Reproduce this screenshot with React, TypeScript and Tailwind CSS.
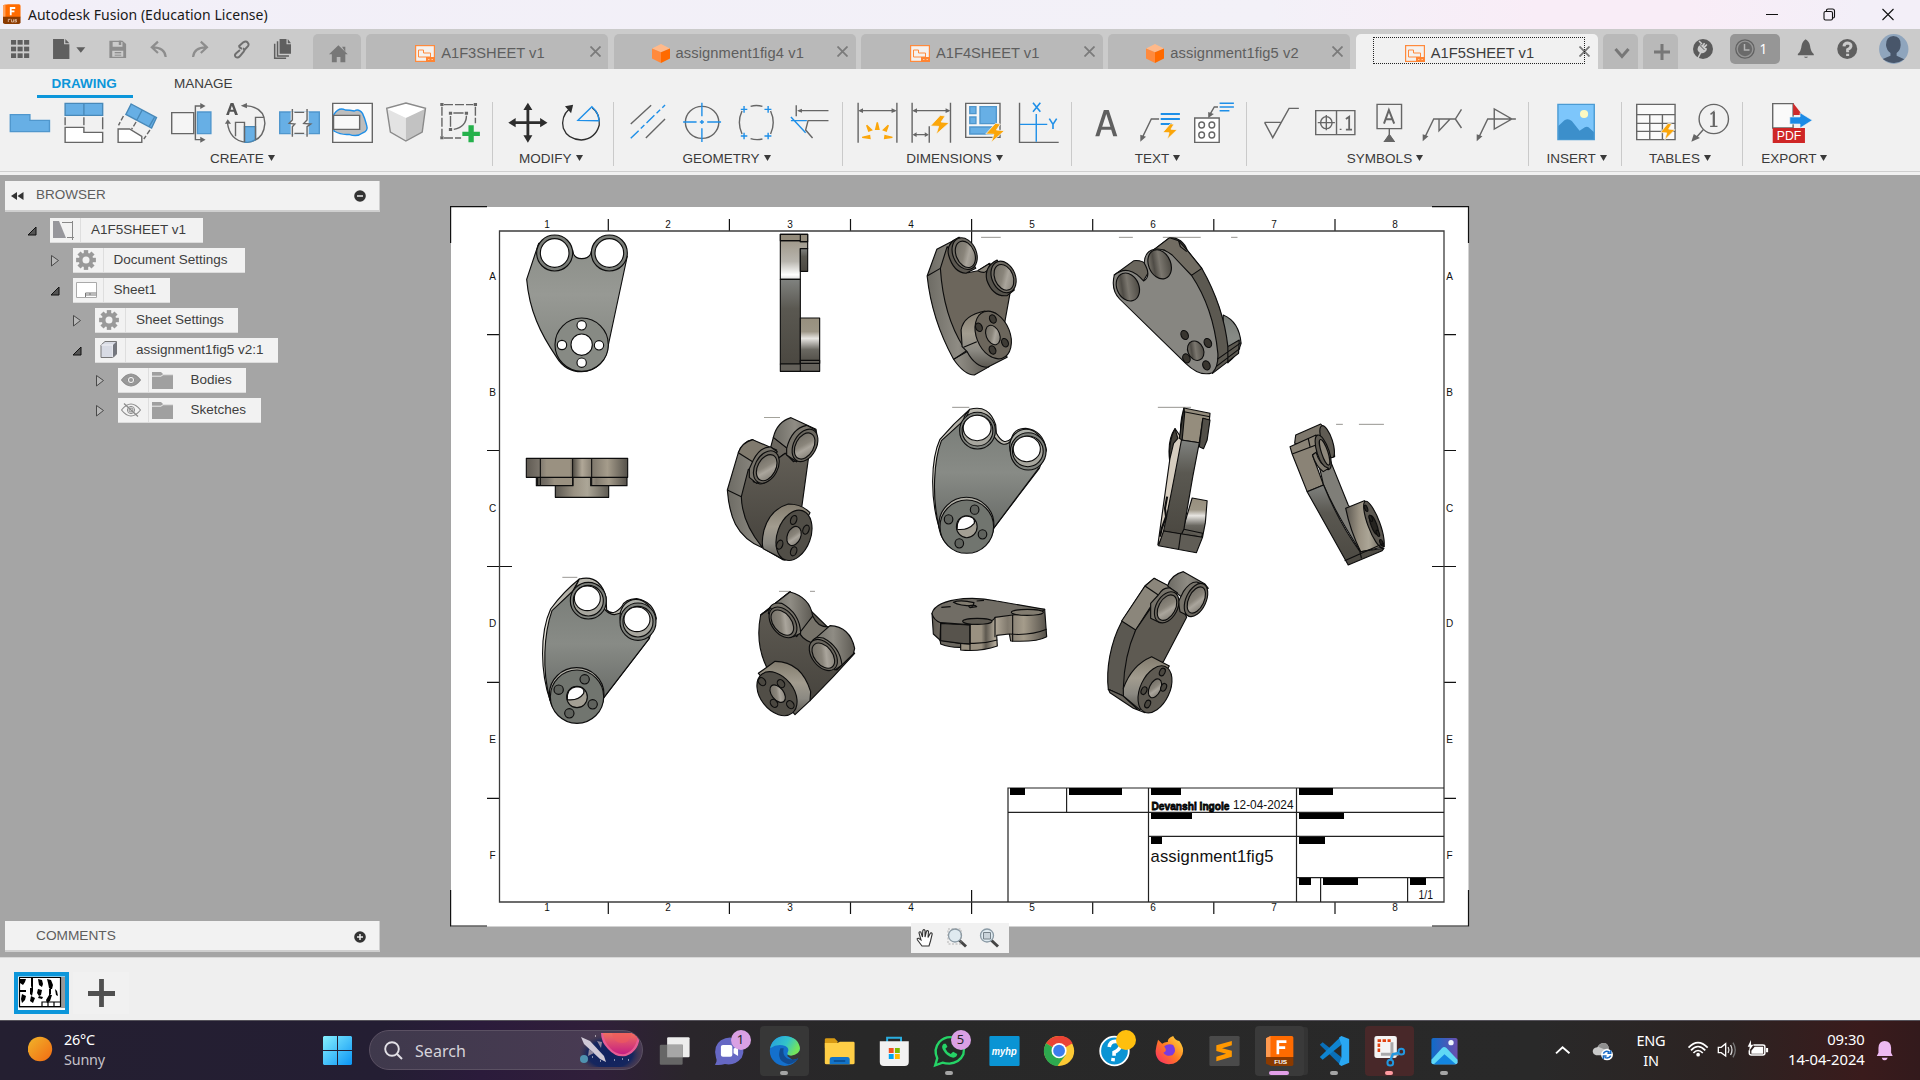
import React from "react";

const SANS = "font-['Liberation_Sans',Arial,sans-serif]";
const UI = "font-['Noto_Sans','Open_Sans',sans-serif]";

type ArtProps = { x: number; y: number; w: number; h: number; children: React.ReactNode; className?: string };

/* Icon artboard: 2.45 units per pixel across, 3 units per pixel down. */
function Art({ x, y, w, h, children, className = "" }: ArtProps) {
  return (
    <svg
      width={w / 2.45}
      height={h / 3}
      viewBox={`${x} ${y} ${w} ${h}`}
      preserveAspectRatio="none"
      fill="none"
      className={`block shrink-0 overflow-visible [&_*]:[vector-effect:non-scaling-stroke] ${className}`}
    >
      {children}
    </svg>
  );
}

function Tool({ cx, children }: { cx: number; children: React.ReactNode }) {
  return (
    <Art x={cx - 65.9} y={303} w={131.8} h={129}>
      <g stroke="#666" strokeWidth="1.4">{children}</g>
    </Art>
  );
}

const BLUE = "#67afe5";
const LINE = "#1e8fe8";
const BOLT = "#fba60a";

/* ---------- title bar and document tabs ---------- */

function TitleBar() {
  return (
    <div className="flex h-[29px] items-center bg-[linear-gradient(90deg,#f2eff8_0%,#f3f1f8_66%,#f9edf7_80%,#f9edf7_88%,#f3eff8_97%)] pl-[3px]">
      <Art x={7} y={12} w={44} h={61}>
        <path d="M7 18 Q8 13 20 13 H46 Q50 13 50 18 V52 H7Z" fill="#ff6b00" />
        <path d="M7 18 L13 13 V52 H7Z" fill="#ffa05a" />
        <path d="M7 50 H50 V67 Q50 72 45 72 H12 Q7 72 7 67Z" fill="#8b3a00" />
        <path d="M26 46 V24 H37 M26 34 H35" stroke="#fff" strokeWidth="1.8" />
        <path d="M20 58 V66 M20 58 H25 M28 58 V66 H33 V58 M41 59 H36 V62 H40 V66 H35" stroke="#e8c9b4" strokeWidth=".8" />
      </Art>
      <span className={`ml-[7px] text-[14px] tracking-[0.03px] whitespace-nowrap text-[#191919] ${UI}`}>Autodesk Fusion (Education License)</span>
      <svg className="mr-[24px] ml-auto" width="130" height="16" fill="none" stroke="#111" strokeWidth="1.1">
        <path d="M0 7.500h12M116.500 2l11 11M127.500 2l-11 11" />
        <rect x="58" y="4.500" width="8.500" height="8.500" rx="1.500" />
        <path d="M60.500 4.500V3q0-1 1.500-1h4.500q2 0 2 2V9.500q0 1.500-1.500 1.500" />
      </svg>
    </div>
  );
}

function SheetIcon() {
  return (
    <svg width="20" height="17" viewBox="0 0 20 17" fill="none" stroke="#ff8a3c">
      <rect x=".6" y=".6" width="18.800" height="15.800" fill="#f5f1ee" strokeWidth="1.200" />
      <path d="M3.500 5h5v3h7v4h-12z" />
      <rect x="11" y="12" width="9" height="5" fill="#ff8432" stroke="none" />
      <path d="M13 14.500h1.500M16.500 14.500h1.500" stroke="#ffe2cc" strokeWidth=".7" />
    </svg>
  );
}

function CubeIcon() {
  return (
    <svg width="18" height="19" viewBox="0 0 18 19">
      <path d="M9 0L0 4.500l9 3.700 9-3.700z" fill="#ffb98a" />
      <path d="M0 4.500l9 3.700V19l-9-4.500z" fill="#ff8a3d" />
      <path d="M18 4.500L9 8.200V19l9-4.500z" fill="#ff6a00" />
    </svg>
  );
}

function DocTab({ label, sheet, active }: { label: string; sheet?: boolean; active?: boolean }) {
  return (
    <div
      className={`relative mr-[5.4px] flex h-[35px] w-[242px] shrink-0 items-center rounded-t-[5px] ${active ? "bg-[#f1f1f1] text-[#3c3c3c]" : "bg-[#b9b9b9] text-[#5e5e5e]"} ${sheet ? "pl-[49px]" : "pl-[38px]"}`}
    >
      {active && <div className="absolute top-[3px] left-[17px] h-[27px] w-[212px] border border-dotted border-[#222]" />}
      <div className="mt-[3px]">{sheet ? <SheetIcon /> : <CubeIcon />}</div>
      <span className={`mt-[3px] ml-[6px] text-[14.700px] whitespace-nowrap ${sheet ? "" : "tracking-[0.1px]"}`}>{label}</span>
      <svg className="mt-[-1px] mr-[7.500px] ml-auto" width="11" height="11" stroke={active ? "#777" : "#7b7b7b"} strokeWidth="1.800">
        <path d="M.5 .5l10 10M10.500 .5l-10 10" />
      </svg>
    </div>
  );
}

function TabBar() {
  return (
    <div className="flex h-[40px] bg-[#cbcbcb]">
      <Art x={0} y={87} w={767} h={120}>
        <g fill="#5f5f5f">
          {[120, 140, 160].map((y) => [27, 43, 59].map((x) => <rect key={`${x}-${y}`} x={x} y={y} width="12.500" height="14" />))}
          <path d="M130 117 H157 V133 H170 V177 H130Z" />
          <path d="M160 117 L170 130 H160Z" />
          <path d="M187 142 H209 L198 158Z" />
        </g>
        <g fill="#8d8d8d">
          <path fillRule="evenodd" d="M268 122 H300 L309 132 V174 H268Z M276 126 V140 H300 V126Z M275 152 V170 H302 V152Z" />
          <rect x="291" y="122" width="6" height="13" />
          <rect x="281" y="156" width="16" height="4" />
          <rect x="281" y="164" width="16" height="3" />
        </g>
        <path d="M374 142 Q404 142 406 171 M387 125 L372 142 L387 159 M505 142 Q475 142 473 171 M492 125 L507 142 L492 159" stroke="#8d8d8d" strokeWidth="2.200" />
        <g stroke="#6f6f6f" strokeWidth="2">
          <path d="M588 150 L580 158 Q573 165 577 170 Q583 176 589 167 L597 155 Q601 148 595 145" />
          <path d="M593 146 Q586 144 586 138 L596 127 Q603 122 607 128 Q612 134 605 142 L598 151" />
        </g>
        <path d="M685 117 H702 V133 H713 V161 H685Z M705 117 L713 130 H705Z" fill="#5f5f5f" />
        <path d="M680 124 V168 H708 M673 131 V175 H701" stroke="#5f5f5f" strokeWidth="1.500" />
      </Art>
      <div className="mt-[5px] mr-[5.5px] flex h-[35px] w-[48px] items-center justify-center rounded-t-[5px] bg-[#b9b9b9] pt-[5px] pl-[4px]">
        <Art x={807} y={134} w={46} h={53}>
          <path d="M830 135 L853 162 H847 V186 H835 V170 H826 V186 H814 V162 H807Z M839 139 H847 V155Z" fill="#777" />
        </Art>
      </div>
      <div className={`mt-[5px] flex ${SANS}`}>
        <DocTab label="A1F3SHEET v1" sheet />
        <DocTab label="assignment1fig4 v1" />
        <DocTab label="A1F4SHEET v1" sheet />
        <DocTab label="assignment1fig5 v2" />
        <DocTab label="A1F5SHEET v1" sheet active />
        <div className="mr-[5.4px] flex w-[34.500px] items-center justify-center rounded-t-[5px] bg-[#b9b9b9] pt-[3px] pl-[3px]">
          <svg width="16" height="12" fill="none" stroke="#777" strokeWidth="3"><path d="M1.500 2L8 9.500 14.500 2" /></svg>
        </div>
        <div className="flex w-[34.500px] items-center justify-center rounded-t-[5px] bg-[#b9b9b9] pl-[3px]">
          <svg width="16" height="16" stroke="#777" strokeWidth="3"><path d="M8 0v16M0 8h16" /></svg>
        </div>
      </div>
      <div className="ml-[15px] flex h-[30px] items-center self-start pt-[10px]">
        <svg className="h-[20px] w-[20px] shrink-0" viewBox="0 0 20 20">
          <circle cx="10" cy="10" r="10" fill="#5b5b5b" />
          <path d="M6.500 13.500q-4-3 0-7.500l1.500-1 .5 1.800 2.500-3 1.200.8-1.800 3 3-2.500 1 1-2.500 2.800 1.800 0q1 2-1.500 4-3.200 2.600-5.700.6z" fill="#cbcbcb" />
          <path d="M4.500 20l3.500-7M6 2l3 3" stroke="#cbcbcb" strokeWidth="1.500" />
          <path d="M6.500 6l5 5" stroke="#5b5b5b" />
        </svg>
      </div>
      <div className="mt-[5px] ml-[17px] flex h-[30px] w-[51px] items-center rounded-[5px] bg-[#969696] pl-[5px]">
        <svg width="20" height="20" fill="none" stroke="#626262"><circle cx="10" cy="10" r="9.200" strokeWidth="1.300" /><circle cx="10" cy="10" r="7.200" fill="#6a6a6a" stroke="none" /><path d="M9.500 5v6h5" stroke="#b5b5b5" strokeWidth="1.500" /></svg>
        <span className={`ml-[5px] text-[13.500px] text-white ${UI}`}>1</span>
      </div>
      <Art x={1240} y={87} w={328} h={120} className="ml-[6px]">
        <path d="M1269 162 Q1277 153 1278 138 Q1280 124 1288 118 Q1297 124 1299 138 Q1300 153 1308 162 V166 H1269Z M1284 170 H1294 Q1289 177 1284 170Z" fill="#5f5f5f" />
        <ellipse cx="1390" cy="147" rx="24.500" ry="30" fill="#5f5f5f" />
        <path d="M1382 139 Q1383 129 1391 129 Q1400 130 1399 139 Q1398 145 1391 149 V157 M1391 161 V168" stroke="#cbcbcb" strokeWidth="3" />
        <ellipse cx="1504" cy="147" rx="36" ry="45" fill="#8fa5bd" />
        <path d="M1503 108 Q1522 109 1521 135 Q1520 152 1511 159 V167 L1530 178 Q1505 200 1477 177 L1496 167 V159 Q1486 150 1485 135 Q1485 109 1503 108Z" fill="#48566a" />
      </Art>
    </div>
  );
}

/* ---------- ribbon ---------- */

function Group({ label, className, children, last, shift = "mr-[11px]" }: { label: string; className: string; children: React.ReactNode; last?: boolean; shift?: string }) {
  return (
    <div className={`relative flex shrink-0 flex-col ${className}`}>
      <div className="flex">{children}</div>
      <div className={`mt-[5.500px] flex items-center justify-center text-[13.500px] leading-[17px] whitespace-nowrap text-[#3a3a3a] ${shift}`}>
        {label}
        <svg className="ml-[4px] shrink-0" width="7" height="6"><path d="M0 0h7L3.500 6z" fill="#3a3a3a" /></svg>
      </div>
      {!last && <div className="absolute top-[1px] right-0 h-[64px] w-px bg-[#cacaca]" />}
    </div>
  );
}

const bolt = (x: number, y: number) => (
  <path d={`M${x + 24} ${y} L${x} ${y + 32} L${x + 20} ${y + 33} L${x + 14} ${y + 57} L${x + 46} ${y + 22} L${x + 26} ${y + 20} L${x + 36} ${y + 2}Z`} fill={BOLT} stroke="#f1f1f1" strokeWidth=".8" />
);

function Ribbon() {
  return (
    <div className={`flex h-[106px] flex-col bg-[#f1f1f1] ${SANS}`}>
      <div className="flex h-[29px] text-[13.500px] leading-[29px]">
        <div className="relative ml-[37px] w-[96px] pl-[14.500px] font-bold text-[#0c96da]">
          DRAWING
          <div className="absolute bottom-0 left-0 h-[3px] w-[96px] bg-[#0c96da]" />
        </div>
        <div className="ml-[41px] text-[#3c3c3c]">MANAGE</div>
      </div>
      <div className="mt-[3px] flex h-[71px] border-b border-[#cfcfcf]">
        <Group label="CREATE" className="w-[493px] pl-[2.800px]">
          <Tool cx={73}><path d="M25 344 H73 V361 H121 V395 H25Z" fill={BLUE} stroke="#5097cd" /></Tool>
          <Tool cx={204}>
            <path d="M158 310 H250 V346 H158Z M204 310 V346" fill={BLUE} stroke="#4889b9" />
            <path d="M158 352 V376 M204 352 V376 M250 352 V388" />
            <path d="M158 382 H204 V397 H250 V427 H158Z" fill="#fff" />
          </Tool>
          <Tool cx={336}>
            <path d="M322 312 L384 353 L372 384 L309 343Z M349 330 L336 360 M379 352 L366 380" fill={BLUE} stroke="#4889b9" />
            <path d="M303 348 L291 376 M334 366 L323 388 M368 390 L353 417" strokeDasharray="5 2" />
            <path d="M290 387 H318 L348 409 V427 H290Z" fill="#fff" />
          </Tool>
          <Tool cx={468}>
            <rect x="421" y="338" width="54" height="63" fill="#f5f5f5" />
            <rect x="484" y="336" width="33" height="65" fill={BLUE} stroke="#5097cd" />
            <path d="M496 318 H479 V419 H496" />
            <path d="M491 309 L504 318 L491 327Z M491 410 L504 419 L491 428Z" fill="#666" stroke="none" />
          </Tool>
          <Tool cx={600}>
            <path d="M554 345 L565 309 H572 L583 345 H576 L573 335 H563 L561 345Z M565 329 H572 L568 317Z" fill="#555" fillRule="evenodd" stroke="none" />
            <path d="M600 317 Q648 320 649 370 Q646 424 603 427 Q562 422 557 366" />
            <path d="M590 317 L605 309 V325Z M551 371 L558 358 L566 371Z" fill="#666" stroke="none" />
            <path d="M599 380 H626 V419 Q612 430 599 426Z" fill={BLUE} stroke="#4889b9" />
            <path d="M577 409 V367 H599 V426 M647 352 H626 V419" />
          </Tool>
          <Tool cx={731}>
            <path d="M684 336 H781 V401 H684Z" fill={BLUE} stroke="#5097cd" />
            <path d="M711 334 H755 V403 H711Z" fill="#f3f3f3" stroke="none" />
            <path d="M720 337 H744 M720 400 H744 M715 327 V360 L707 370 L721 372 L715 380 V410 M751 327 V360 L743 370 L760 372 L751 380 V410" />
          </Tool>
          <Tool cx={862}>
            <rect x="815" y="310" width="97" height="117" fill="#fbfbfb" />
            <path d="M818 343 Q830 320 846 330 Q857 330 868 333 Q879 325 888 340 Q894 355 898 375 Q903 393 888 399 Q875 412 855 403 Q835 405 818 393Z" fill="#bdbdbd" stroke={LINE} />
            <rect x="817" y="346" width="64" height="42" fill="#f8f8f8" />
          </Tool>
          <Tool cx={995}>
            <path d="M995 309 L948 325 V331 L995 354 L1043 331 V325Z" fill="#fff" stroke="none" />
            <path d="M948 326 L995 354 V423 L957 396Z" fill="#e3e3e3" stroke="none" />
            <path d="M1043 326 L995 354 V423 L1035 396Z" fill="#c2c2c2" stroke="none" />
            <path d="M995 309 L1043 325 L1035 396 L995 423 L957 396 L948 325Z" stroke="#8a8a8a" />
          </Tool>
          <Tool cx={1127}>
            <path d="M1088 314 H1160 M1083 320 V408 M1165 320 V370 M1088 414 H1130" strokeDasharray="9 2" />
            <path d="M1079 309h8v9h-8z M1161 309h8v9h-8z M1079 409h8v9h-8z M1100 335h8v9h-8z M1139 335h8v9h-8z M1100 384h8v9h-8z" fill="#666" stroke="none" />
            <path d="M1104 348 V380 M1111 339 H1136 M1143 347 Q1143 380 1112 388" />
            <path d="M1148 376 H1161 V395 H1176 V408 H1161 V427 H1148 V408 H1133 V395 H1148Z" fill="#25b14b" stroke="none" />
          </Tool>
        </Group>
        <Group label="MODIFY" className="w-[121px] pl-[7.500px]" shift="mr-[13px]">
          <Tool cx={1292}>
            <path d="M1292 320 V416 M1255 368 H1330" stroke="#2d2d2d" strokeWidth="2.800" />
            <path d="M1292 308 L1303 330 H1281Z M1292 428 L1303 406 H1281Z M1244 368 L1262 354 V382Z M1340 368 L1322 354 V382Z" fill="#2d2d2d" stroke="none" />
          </Tool>
          <Tool cx={1424}>
            <path d="M1396 326 Q1374 350 1381 385 Q1391 418 1425 420 Q1460 416 1469 375 Q1471 340 1452 324" stroke="#2d2d2d" strokeWidth="1.300" />
            <path d="M1405 314 L1400 340 L1385 319Z" fill="#2d2d2d" stroke="none" />
            <path d="M1417 361 L1451 320 Q1469 340 1468 362Z" stroke={LINE} />
          </Tool>
        </Group>
        <Group label="GEOMETRY" className="w-[229px] pl-[7px]">
          <Tool cx={20}>
            <path d="M-22 372 L28 316 M15 414 L62 357" />
            <path d="M-22 415 L62 315" stroke={LINE} strokeDasharray="11 3 5 3" />
          </Tool>
          <Tool cx={151}>
            <ellipse cx="151.500" cy="367" rx="41" ry="48" />
            <path d="M151 308 V349 M151 385 V426 M105 366 H138 M164 366 H198 M146 366 H156 M151 360 V372" stroke={LINE} />
          </Tool>
          <Tool cx={284}>
            <path d="M271 319 Q285 314 300 319 M320 333 Q333 367 320 402 M300 417 Q285 421 271 416 M250 402 Q237 367 250 333" />
            <path d="M247 328 H263 M255 318 V338 M305 328 H322 M314 318 V338 M247 408 H263 M255 398 V418 M305 408 H322 M314 398 V418" stroke={LINE} />
          </Tool>
          <Tool cx={415}>
            <path d="M384 316 V349 M390 332 H463 M463 362 H413 L407 390 L424 414" />
            <path d="M386 332 L398 326 V338Z" fill="#666" stroke="none" />
            <path d="M371 362 H410 M371 351 L407 398" stroke={LINE} />
          </Tool>
        </Group>
        <Group label="DIMENSIONS" className="w-[229px] pl-[7px]" shift="mr-[13px]">
          <Tool cx={581}>
            <path d="M535 308 V428 M630 308 V428 M540 332 H625" />
            <path d="M535 332 L547 325 V339Z M630 332 L617 325 V339Z" fill="#666" stroke="none" />
            <path d="M578 388 L582 367 L586 388Z M561 393 L556 376 L568 390Z M604 393 L609 376 L597 390Z M545 412 L563 407 L564 415Z M619 412 L601 407 L600 415Z" fill={BOLT} stroke={BOLT} />
          </Tool>
          <Tool cx={713}>
            <path d="M667 308 V428 M761 308 V428 M672 332 H757 M709 379 V428 M673 404 H704" />
            <path d="M667 332 L679 325 V339Z M761 332 L749 325 V339Z M668 404 L678 397 V411Z M708 404 L698 397 V411Z" fill="#666" stroke="none" />
            {bolt(712, 346)}
          </Tool>
          <Tool cx={844}>
            <rect x="797" y="310" width="84" height="102" fill="#f7f7f7" />
            <path d="M807 320 H822 V341 H807Z M807 351 H822 V371 H807Z M832 320 H872 V371 H832Z M807 381 H872 V402 H807Z" fill={BLUE} stroke="#5097cd" />
            {bolt(846, 370)}
          </Tool>
          <Tool cx={975}>
            <path d="M930 308 V427 H1026" />
            <path d="M971 342 V425 M931 373 H998" stroke={LINE} />
            <path d="M963 308 L981 335 M981 308 L963 335 M1003 356 L1012 373 L1021 356 M1012 373 V387" stroke={LINE} strokeWidth="1.600" />
          </Tool>
        </Group>
        <Group label="TEXT" className="w-[175px] pl-[7px]">
          <Tool cx={1141}><path d="M1115 409 L1136 330 H1148 L1169 409 H1159 L1154 389 H1130 L1125 409Z M1132 380 H1152 L1142 342Z" fill="#606060" fillRule="evenodd" stroke="none" /></Tool>
          <Tool cx={1274}>
            <path d="M1272 357 H1253 L1230 415" />
            <path d="M1226 425 V404 L1240 410Z" fill="#666" stroke="none" />
            <path d="M1276 342 H1323 M1276 357 H1323 M1276 372 H1303" stroke={LINE} strokeWidth="1.800" />
            <g transform="translate(310 76) scale(.76 .82)">{bolt(1278, 360)}</g>
          </Tool>
          <Tool cx={1405}>
            <path d="M1358 354 H1418 V427 H1358Z" fill="#fff" />
            <ellipse cx="1375" cy="375" rx="7" ry="9" /><ellipse cx="1400" cy="375" rx="7" ry="9" /><ellipse cx="1375" cy="405" rx="7" ry="9" /><ellipse cx="1400" cy="405" rx="7" ry="9" />
            <path d="M1415 321 H1406 L1394 346" /><path d="M1391 354 V336 L1405 342Z" fill="#666" stroke="none" />
            <path d="M1419 310 H1454 M1419 321 H1454 M1419 332 H1443" stroke={LINE} strokeWidth="1.500" />
          </Tool>
        </Group>
        <Group label="SYMBOLS" className="w-[282px] pl-[7px]" shift="mr-[13px]">
          <Tool cx={2}><path d="M-38 367 H2 M-38 367 L-18 413 L22 325 H46" /></Tool>
          <Tool cx={134}>
            <path d="M87 332 H183 V404 H87Z M138 332 V404 M92 368 H134 M113 345 V391" />
            <ellipse cx="113" cy="368" rx="14" ry="18" />
            <path d="M148 386 V390 M161 357 L169 350 V389 M161 389 H176" strokeWidth="1.800" />
          </Tool>
          <Tool cx={265}>
            <path d="M236 313 H296 V386 H236Z M266 386 V410 M255 424 L266 405 L277 424Z" />
            <path d="M255 424 L266 405 L277 424Z" fill="#666" />
            <path d="M253 371 L265 330 L278 371 M257 358 H274" strokeWidth="2" />
          </Tool>
          <Tool cx={396}>
            <path d="M353 415 L376 357 H429 L444 328 M429 357 L444 384 M389 357 V392 L416 357" />
            <path d="M349 424 V403 L363 409Z" fill="#666" stroke="none" />
          </Tool>
          <Tool cx={528}>
            <path d="M485 415 L508 357 H577 M524 327 V387 L567 357Z" />
            <path d="M481 424 V403 L495 409Z" fill="#666" stroke="none" />
          </Tool>
        </Group>
        <Group label="INSERT" className="w-[92.500px] pl-[19.500px]" shift="mr-[17px]">
          <Tool cx={724}>
            <rect x="680" y="313" width="89" height="106" fill="#7dc6fb" stroke="#4b9bd3" />
            <path d="M681 378 L696 361 Q705 353 714 363 L733 392 L746 382 Q753 377 759 386 L768 396 V418 H681Z" fill="#3c8fcb" stroke="none" />
            <ellipse cx="744" cy="342" rx="10" ry="12" fill="#fdf9c2" stroke="none" />
          </Tool>
        </Group>
        <Group label="TABLES" className="w-[121px] pl-[7px]" shift="mr-[11px]">
          <Tool cx={920}>
            <path d="M873 313 H967 V419 H873Z" fill="#fafafa" />
            <path d="M873 344 H967 M873 370 H967 M873 394 H967 M905 344 V419 M936 344 V419" />
            <g transform="translate(215 55) scale(.77 .87)">{bolt(930, 362)}</g>
          </Tool>
          <Tool cx={1050}>
            <ellipse cx="1062" cy="357" rx="36" ry="44" />
            <path d="M1036 389 L1018 414 M1054 343 L1062 335 V379 M1053 379 H1071" />
            <path d="M1062 336 V379" strokeWidth="2.200" />
            <path d="M1007 425 L1013 402 L1028 414Z" fill="#666" stroke="none" />
          </Tool>
        </Group>
        <Group label="EXPORT" className="w-[104px] pl-[22.500px]" shift="mr-[23px]" last>
          <Tool cx={1254}>
            <path d="M1207 311 H1257 V384 H1207Z" fill="#fafafa" />
            <path d="M1257 309 L1280 345 H1257Z" fill="#cf2a2a" stroke="none" />
            <path d="M1207 384 H1286 V429 H1207Z" fill="#cf2626" stroke="none" />
            <path d="M1249 351 H1274 V338 L1304 361 L1274 384 V372 H1249Z" fill="#1c8be6" stroke="#f1f1f1" strokeWidth=".6" />
            <text x="1217" y="421" fontSize="41" fill="#fff" stroke="none" textLength="60" lengthAdjust="spacingAndGlyphs">PDF</text>
          </Tool>
        </Group>
      </div>
    </div>
  );
}

/* ---------- browser tree ---------- */

function Twisty({ open }: { open?: boolean }) {
  return (
    <svg className="mr-[13px] shrink-0" width="10" height="12">
      {open ? <path d="M9 2v8H1z" fill="#555" stroke="#111" /> : <path d="M1.500 .5v10.500L8.500 5.500z" fill="#b8b8b8" stroke="#4a4a4a" />}
    </svg>
  );
}

function Row({ indent, open, width, icon, icon2, label }: { indent: string; open?: boolean; width: string; icon: React.ReactNode; icon2?: React.ReactNode; label: string }) {
  return (
    <div className={`flex h-[30px] items-center ${indent}`}>
      <Twisty open={open} />
      <div className={`flex h-[25.500px] items-center border-b border-[#dcdcdc] bg-[#f2f2f2] ${width}`}>
        <div className="flex h-full w-[31px] shrink-0 items-center justify-center border-r border-[#dedede] pr-[3px]">{icon}</div>
        {icon2 && <div className="ml-[3px] w-[29px]">{icon2}</div>}
        <span className="ml-[10px] text-[13.500px] whitespace-nowrap text-[#3e3e3e]">{label}</span>
      </div>
    </div>
  );
}

const Gear = () => (
  <svg width="20" height="20" viewBox="-10 -10 20 20" fill="#999">
    {[0, 45, 90, 135].map((a) => <path key={a} d="M-2.200 -9.900H2.200V9.900H-2.200z" transform={`rotate(${a})`} />)}
    <circle r="7.300" />
    <circle r="3.500" fill="#f2f2f2" />
  </svg>
);
const Folder = () => <svg width="21" height="17"><path d="M0 0h9l2 2h10v15H0z" fill="#a0a0a0" /><path d="M0 4.200h9l2-1.500h10" stroke="#eee" fill="none" /></svg>;
const Eye = ({ off }: { off?: boolean }) => (
  <svg width="20" height="14" viewBox="0 0 20 14" fill="none" stroke="#8b8b8b">
    <path d="M.5 7Q10-5 19.500 7 10 19 .5 7z" fill={off ? "none" : "#999"} strokeWidth="1.100" />
    <circle cx="10" cy="7" r="3.600" fill={off ? "none" : "#f2f2f2"} />
    <circle cx="10" cy="7" r="2" fill={off ? "none" : "#999"} stroke={off ? "#8b8b8b" : "none"} />
    {off && <path d="M3 .5l14 13" strokeWidth="1.300" />}
  </svg>
);

function Browser() {
  return (
    <div className={`flex w-[375px] flex-col ${SANS}`}>
      <div className="flex h-[31px] items-center border-r border-b-2 border-[#cfcfcf] bg-[#f2f2f2] pt-[1px] pl-[6px]">
        <svg width="13" height="8" fill="#333"><path d="M6 0v8L0 4zM12.500 0v8l-6-4z" /></svg>
        <span className="ml-[12px] text-[13.500px] text-[#5d5d5d]">BROWSER</span>
        <svg className="mr-[13.500px] ml-auto" width="12" height="12"><circle cx="6" cy="6" r="5.800" fill="#333" /><path d="M3 6h6" stroke="#eee" strokeWidth="1.500" /></svg>
      </div>
      <div className="mt-[4px] flex flex-col">
        <Row indent="pl-[22px]" open width="w-[152.500px]" label="A1F5SHEET v1" icon={
          <svg width="21" height="19"><path d="M0 0h6l7 17H0z" fill="#97979c" /><path d="M9 1.500h11M19.500 0v19M14 16.500h7" stroke="#888" fill="none" /></svg>} />
        <Row indent="pl-[44.500px]" width="w-[172.500px]" label="Document Settings" icon={<Gear />} />
        <Row indent="pl-[44.500px]" open width="w-[97.500px]" label="Sheet1" icon={
          <svg width="21" height="16"><path d="M.5 .5h20v15H.5z" fill="#fff" stroke="#aaa" /><path d="M9.500 15v-4h11M9.500 13h11M14 11v2" stroke="#777" fill="none" /></svg>} />
        <Row indent="pl-[67px]" width="w-[142.500px]" label="Sheet Settings" icon={<Gear />} />
        <Row indent="pl-[67px]" open width="w-[182.500px]" label="assignment1fig5 v2:1" icon={
          <svg width="18" height="18"><path d="M1 4l4-3.500h11.500V13L13 16.500H1z" fill="#d8dbe4" stroke="#777" /><path d="M1 4h12v12.500" fill="none" stroke="#f2f2f6" /><path d="M13 4l3.500-3.500V13L13 16.500z" fill="#74777f" /></svg>} />
        <Row indent="pl-[89.500px]" width="w-[128.500px]" label="Bodies" icon={<Eye />} icon2={<Folder />} />
        <Row indent="pl-[89.500px]" width="w-[143.500px]" label="Sketches" icon={<Eye off />} icon2={<Folder />} />
      </div>
    </div>
  );
}

/* ---------- drawing sheet ---------- */

type El = { cx: number; cy: number; rx: number; ry: number; r?: number; f: string };
const E = ({ cx, cy, rx, ry, r = 0, f }: El) => <ellipse cx={cx} cy={cy} rx={rx} ry={ry} fill={f} transform={`rotate(${r} ${cx} ${cy})`} />;
const holes = (pts: number[][], rx: number, ry: number, r: number, f: string) => pts.map(([x, y]) => <E key={`${x}-${y}`} cx={x} cy={y} rx={rx} ry={ry} r={r} f={f} />);

const stops: Record<string, [string, string][]> = {
  gPlate: [["0", "#8b8e88"], [".4", "#979994"], ["1", "#80837d"]],
  gPlate2: [["0", "#787c77"], [".5", "#888b86"], ["1", "#686b67"]],
  gTop: [["0", "#989080"], [".6", "#b8b5ae"], [".9", "#fff"], ["1", "#ddd"]],
  gLow: [["0", "#80827f"], [".35", "#5a5851"], ["1", "#4b4841"]],
  gHub: [["0", "#978f7e"], [".3", "#9d9686"], [".45", "#e8e6e2"], [".7", "#6a6861"], ["1", "#4f4c45"]],
  gHub2: [["0", "#827b6d"], [".4", "#a29c8f"], [".7", "#8b8982"], ["1", "#5a5750"]],
  gDark: [["0", "#625e56"], ["1", "#47443e"]],
};
const hstops: Record<string, [string, string][]> = {
  hBody: [["0", "#5f5a52"], [".12", "#79736a"], [".2", "#9a9181"], [".43", "#9a9181"], [".47", "#5d584f"], [".55", "#b1a898"], [".66", "#817a6e"], [".8", "#a59c8b"], ["1", "#55514a"]],
  hCyl: [["0", "#5b5750"], [".35", "#9a9283"], [".6", "#aca697"], ["1", "#5e5a52"]],
  hSide: [["0", "#6d6b64"], [".5", "#8f8c84"], ["1", "#5d5a53"]],
  hEdge: [["0", "#e2dfd5"], ["1", "#9a978e"]],
};

function Parts() {
  return (
    <>
      <g transform="translate(440 200) scale(.33333)" stroke="#0d0d0d" strokeWidth="3.400" strokeLinejoin="round">
        <path d="M296 130 L260 238 C268 330 300 400 350 472 C370 505 400 515 425 515 C465 515 500 485 505 435 L562 168 L455 150 Q452 176 425 176 Q400 176 398 150Z" fill="url(#gPlate)" />
        <E cx={344} cy={159} rx={54} ry={54} f="#7b7e79" /><E cx={508} cy={159} rx={54} ry={54} f="#7b7e79" />
        <E cx={344} cy={159} rx={43} ry={43} f="#fff" /><E cx={508} cy={159} rx={43} ry={43} f="#fff" />
        <E cx={425} cy={434} rx={80} ry={80} f="#878a84" /><E cx={425} cy={434} rx={32} ry={32} f="#fff" />
        {holes([[425, 376], [366, 435], [477, 436], [425, 488]], 14, 14, 0, "#fff")}

        <path d="M1021 103 H1103 V146 H1081 V238 H1021Z" fill="url(#gTop)" />
        <path d="M1021 122 H1081 M1081 103 V125 H1103" fill="none" />
        <path d="M1021 103 H1081 V122 H1021Z M1081 103 H1103 V125 H1081Z" fill="#948c7c" />
        <path d="M1081 146 H1103 V214 H1081Z" fill="url(#gLow)" />
        <path d="M1021 238 H1081 V492 H1021Z" fill="url(#gLow)" />
        <path d="M1081 354 H1139 V490 H1081Z" fill="url(#gHub)" />
        <path d="M1021 492 H1081 V514 H1021Z M1081 481 H1139 V514 H1081Z M1081 490 H1139" fill="#65625b" />

        <path d="M346 832 H506 V892 H346Z" fill="url(#hCyl)" />
        <path d="M289 830 H399 V857 H289Z M452 830 H561 V857 H452Z" fill="url(#hBody)" />
        <path d="M259 775 H563 V832 H259Z" fill="url(#hBody)" />
        <path d="M301 775 V857 M398 775 V857 M455 775 V857 M293 832 V857" />

        <path d="M938 719 Q908 725 895 758 L862 870 C868 945 885 1010 970 1045 L1030 1080 L1060 1000 L1000 760Z" fill="url(#hSide)" />
        <path d="M992 742 L1000 712 L1055 740 L1060 785 L1036 760 L1015 775Z" fill="#6b675f" />
        <path d="M925 808 L904 890 C905 940 925 990 965 1040 L1080 960 L1106 770 L1060 785 L1036 760 L1015 775 Q1000 850 960 852 L940 845 L941 815Z" fill="url(#gDark)" />
        <path d="M862 870 L904 890 M1000 712 L1042 745" fill="none" />
        <path d="M1053 653 Q1012 665 1000 712 L1042 745 V762 L1070 785 L1130 700 L1128 688Z" fill="url(#hSide)" />
        <path d="M1040 745 Q1055 685 1100 676 L1127 690 L1070 785 L1040 765Z" fill="#77736a" />
        <E cx={1095} cy={736} rx={34} ry={52} r={28} f="#6b675f" /><E cx={1094} cy={738} rx={27} ry={42} r={28} f="url(#hBore)" />
        <path d="M938 719 Q905 728 895 758 L945 790 L1010 750Z" fill="#807a6e" />
        <path d="M928 806 L940 780 Q960 740 992 741 L1012 755 L950 850 L928 832Z" fill="#77736a" />
        <E cx={979} cy={801} rx={34} ry={52} r={28} f="#6b675f" /><E cx={980} cy={803} rx={27} ry={42} r={28} f="url(#hBore)" />
        <path d="M1045 912 Q990 928 972 990 Q963 1030 970 1046 L1035 1081 L1110 938 Q1085 912 1045 912Z" fill="url(#gHub2)" />
        <E cx={1062} cy={1006} rx={50} ry={78} r={20} f="#514e47" /><E cx={1062} cy={1008} rx={20} ry={30} r={22} f="url(#hBore)" />
        {holes([[1061, 960], [1098, 989], [1019, 1034], [1061, 1054]], 9, 14, 20, "#4a4740")}
      </g>

      <g transform="translate(900 200) scale(.35714 .33333)" stroke="#0d0d0d" strokeWidth="3.200" strokeLinejoin="round">
        <path d="M168 112 L103 148 L76 228 C84 310 105 390 150 478 Q180 525 208 525 L250 500 L185 440 L140 135Z" fill="url(#hSide)" />
        <path d="M113 205 L132 140 L190 218 L218 212 L250 190 L308 280 L292 375 L240 420 L178 442 C135 370 118 290 113 205Z" fill="#6c665c" />
        <path d="M76 228 L113 205 M150 478 L215 432" fill="none" />
        <path d="M165 112 Q128 130 136 165 Q150 218 185 220 L212 205Z" fill="#5b5750" />
        <E cx={181} cy={161} rx={33} ry={49} r={-20} f="#6f6b63" /><E cx={183} cy={163} rx={26} ry={41} r={-20} f="url(#hBore)" />
        <path d="M218 212 L252 190 L250 205 Q240 225 218 212" fill="#8a857a" />
        <path d="M272 180 Q235 200 243 240 Q260 292 300 287 L320 270Z" fill="#56534c" />
        <E cx={290} cy={231} rx={33} ry={49} r={-20} f="#6f6b63" /><E cx={291} cy={232} rx={26} ry={40} r={-20} f="url(#hBore)" />
        <path d="M238 333 Q178 345 171 390 L174 440 L188 455 Q210 500 245 502 L300 472Z" fill="url(#gHub2)" />
        <path d="M178 442 L215 425 M150 478 L188 455" />
        <E cx={261} cy={405} rx={47} ry={74} r={-20} f="#6c665c" /><E cx={260} cy={405} rx={19} ry={30} r={-20} f="url(#hBore)" />
        {holes([[260, 357], [221, 382], [294, 428], [259, 450]], 9, 13, -20, "#3e3b35")}

        <path d="M905 345 Q950 365 955 430 Q948 462 918 488 L905 440Z" fill="url(#gPlate2)" />
        <path d="M712 148 L755 113 Q790 112 805 152 L845 205 C890 290 910 360 918 440 L950 420 L948 460 L875 520 L816 226Z" fill="#5c5951" />
        <path d="M712 148 L755 113 L780 122 L805 152 L845 205 L816 226 L740 150Z" fill="#716c62" />
        <path d="M600 225 L655 182 Q680 180 690 195 L697 215 L680 245Z" fill="#6a665d" />
        <path d="M600 225 Q590 270 615 297 L800 490 Q840 532 875 518 Q892 500 890 460 C880 350 850 280 816 226 L762 165 Q735 142 712 148 Q684 155 684 190 Q705 228 682 243 Q640 190 600 225Z" fill="#878681" />
        <E cx={727} cy={193} rx={31} ry={45} r={-20} f="url(#hBore2)" /><E cx={638} cy={261} rx={31} ry={43} r={-20} f="url(#hBore2)" />
        <path d="M888 478 L955 428 M885 500 L952 445 M918 440 V490 M780 122 L785 140 L803 155" fill="none" />
        <E cx={828} cy={452} rx={22} ry={30} r={-20} f="url(#hBore2)" />
        {holes([[797, 405], [862, 429], [802, 475], [858, 496]], 10, 14, -20, "#38352f")}

        <path d="M195 628 Q150 670 112 718 C85 780 85 900 110 985 L140 960 L180 650Z" fill="url(#hEdge)" />
        <path d="M195 628 Q250 612 268 675 L270 700 Q290 740 312 715 Q320 685 352 685 Q400 690 410 750 L390 805 L262 985 L150 960 L186 650Z" fill="#b9b7ae" />
        <path d="M185 655 L116 722 C95 780 88 890 110 985 L262 985 L388 805 L355 770 L312 722 Q290 748 265 712 L220 650Z" fill="url(#gPlate2)" />
        <E cx={217} cy={692} rx={50} ry={55} f="#7e817c" /><E cx={217} cy={692} rx={43} ry={46} f="#a7a69e" /><E cx={216} cy={684} rx={39} ry={38} f="#fff" />
        <E cx={353} cy={740} rx={46} ry={52} f="#aeb0a9" /><E cx={359} cy={754} rx={50} ry={56} f="#7e817c" /><E cx={358} cy={754} rx={43} ry={46} f="#a7a69e" /><E cx={355} cy={747} rx={38} ry={38} f="#fff" />
        <E cx={186} cy={974} rx={77} ry={82} f="#b1afa6" /><E cx={187} cy={980} rx={75} ry={80} f="#71756f" />
        <E cx={187} cy={980} rx={29} ry={33} f="#a39f94" /><path d="M160 988 Q158 952 185 948 Q212 950 208 970 Q190 992 160 988Z" fill="#fff" />
        {holes([[209, 929], [136, 958], [231, 1003], [166, 1030]], 12, 14, 0, "#5f625d")}

        <path d="M770 686 Q748 720 755 782 L722 1035 L745 995 L792 720Z" fill="#d6cdbf" />
        <path d="M770 686 Q752 720 755 780 L766 730 L778 715Z" fill="#45423b" />
        <path d="M795 624 L868 640 L866 662 L848 655 L838 728 L788 720 Q780 680 795 624Z" fill="#958d7d" />
        <path d="M795 624 L782 715 L790 720 L797 640Z" fill="#45423b" />
        <path d="M848 655 L868 660 L860 720 L850 746 L838 740Z" fill="#524f48" />
        <path d="M795 635 L868 650" />
        <path d="M818 894 L860 902 L855 968 L847 1012 L788 1003Z" fill="url(#gHub)" />
        <path d="M788 720 L838 728 Q815 850 795 988 L788 1003 L738 993 Q760 880 788 720Z" fill="url(#gLow)" />
        <path d="M738 993 L847 1012 L830 1058 L724 1037Z M786 1002 L780 1048 M795 988 L847 1000 L845 1012" fill="#605d56" />
        <path d="M748 890 L742 925 L745 950 L733 985 L728 1010" fill="none" strokeWidth="6" />

        <path d="M1178 672 L1108 705 L1105 730 L1165 740 L1200 775 L1217 770 Q1215 710 1178 672Z" fill="#7d776c" />
        <E cx={1196} cy={725} rx={15} ry={50} r={-17} f="#5f5b53" />
        <path d="M1165 705 L1092 740 L1098 762 L1140 875 L1186 855 L1155 765 L1180 745Z" fill="#8a8376" />
        <path d="M1165 735 L1098 762 M1143 715 L1148 740" />
        <path d="M1174 800 L1200 800 L1206 785 L1255 915 L1270 935 L1290 1055 Q1220 940 1186 855Z" fill="#7f7e78" />
        <E cx={1185} cy={757} rx={17} ry={54} r={-17} f="#5f5b53" /><E cx={1189} cy={757} rx={9} ry={40} r={-17} f="#8e887c" />
        <path d="M1155 765 L1165 757 Q1175 795 1200 805 L1185 815 Q1165 800 1155 765Z" fill="#827c71" />
        <path d="M1248 925 L1300 902 Q1350 970 1356 1040 L1290 1055 Q1260 990 1248 925Z" fill="url(#hCyl)" />
        <path d="M1140 875 L1186 855 Q1230 970 1288 1055 L1355 1045 L1350 1052 L1255 1095Z" fill="url(#gLow)" />
        <E cx={1327} cy={973} rx={17} ry={73} r={-19} f="#5b5750" /><E cx={1327} cy={975} rx={8} ry={30} r={-19} f="#25231f" />
        {holes([[1305, 925], [1318, 955], [1338, 1000], [1348, 1028]], 4, 10, -19, "#25231f")}
        <path d="M1245 1082 L1355 1030 M1288 1055 L1292 1075" fill="none" />
        <path d="M227 112 H282 M613 112 H652 M736 112 H842 M927 112 H945 M146 622 H194 M722 622 H815 M1221 673 H1240 M1285 673 H1355" strokeWidth="1.800" stroke="#57544d" />
      </g>

      <g transform="translate(440 510) scale(.33333)" stroke="#0d0d0d" strokeWidth="3.400" strokeLinejoin="round">
        <path d="M418 207 Q370 245 332 297 C298 370 302 490 330 570 L360 540 L400 240Z" fill="url(#hEdge)" />
        <path d="M418 207 Q480 192 498 262 L500 300 Q520 320 545 290 Q555 267 590 266 Q640 275 649 325 L628 385 L492 562 L370 540 L405 235Z" fill="#b9b7ae" />
        <path d="M402 240 L336 302 C312 370 305 480 330 570 L492 562 L628 385 L590 350 L547 305 Q520 325 496 300 L440 230Z" fill="url(#gPlate2)" />
        <E cx={445} cy={272} rx={54} ry={55} f="#7e817c" /><E cx={445} cy={272} rx={45} ry={46} f="#a7a69e" /><E cx={442} cy={265} rx={39} ry={37} f="#fff" />
        <E cx={588} cy={320} rx={48} ry={52} f="#aeb0a9" /><E cx={594} cy={335} rx={54} ry={56} f="#7e817c" /><E cx={594} cy={335} rx={45} ry={46} f="#a7a69e" /><E cx={591} cy={328} rx={39} ry={37} f="#fff" />
        <E cx={410} cy={553} rx={82} ry={80} f="#b1afa6" /><E cx={411} cy={560} rx={80} ry={80} f="#71756f" />
        <E cx={411} cy={561} rx={31} ry={32} f="#a39f94" /><path d="M382 569 Q380 533 410 530 Q436 532 431 550 Q415 573 382 569Z" fill="#fff" />
        {holes([[434, 508], [356, 539], [458, 583], [388, 610]], 14, 14, 0, "#5f625d")}

        <path d="M1050 245 L962 315 Q945 400 980 472 L1110 572 L1180 500 L1244 430 L1110 300Z" fill="url(#gDark)" />
        <path d="M1050 245 L962 315 L985 300Z" fill="#a9a498" />
        <path d="M1118 318 Q1135 355 1170 350 L1115 398 Q1080 385 1078 362Z" fill="#77736a" />
        <path d="M990 292 L1050 246 Q1110 262 1118 318 L1070 380 L985 310Z" fill="url(#hSide)" />
        <path d="M990 292 Q1000 275 1025 280 Q1080 310 1082 370 L1060 380Z" fill="#77736a" />
        <E cx={1029} cy={337} rx={34} ry={52} r={-38} f="#6b675f" /><E cx={1027} cy={338} rx={27} ry={43} r={-38} f="url(#hBore)" />
        <path d="M1115 395 L1170 347 Q1230 350 1244 415 L1240 432 L1190 480Z" fill="url(#hSide)" />
        <path d="M1115 395 Q1125 378 1150 384 Q1200 410 1206 465 L1185 480Z" fill="#77736a" />
        <E cx={1150} cy={435} rx={34} ry={53} r={-38} f="#6b675f" /><E cx={1150} cy={437} rx={27} ry={43} r={-38} f="url(#hBore)" />
        <path d="M955 490 L1005 454 Q1085 455 1112 545 L1110 572 L1065 614Z" fill="url(#gHub2)" />
        <E cx={1011} cy={551} rx={50} ry={74} r={-38} f="#514e47" /><E cx={1013} cy={551} rx={18} ry={30} r={-38} f="url(#hBore)" />
        {holes([[966, 515], [1023, 521], [1002, 580], [1051, 584]], 10, 13, -38, "#4a4740")}
        <path d="M367 202 H412 M1017 244 H1050 M1110 244 H1125" strokeWidth="1.800" stroke="#57544d" />
      </g>
      <path d="M764 417.500H780" stroke="#8b8a80" strokeWidth=".8" />

      <g transform="translate(900 560) scale(.33333)" stroke="#0d0d0d" strokeWidth="3.400" strokeLinejoin="round">
        <path d="M120 235 L122 252 Q150 264 190 262 V240Z" fill="#6b675f" />
        <path d="M96 160 L100 222 L120 240 L182 250 V270 Q240 276 292 258 L290 226 L328 222 L332 243 Q410 247 440 230 L434 148 L290 150Z" fill="url(#hBody)" />
        <path d="M122 190 L210 195 V252 L182 250 L120 242Z" fill="#57534c" />
        <path d="M96 160 Q105 125 190 116 Q240 112 290 123 L434 148 L425 155 L338 165 L285 172 Q280 190 205 194 L122 188 Q100 180 96 160Z" fill="#716d65" />
        <E cx={232} cy={184} rx={44} ry={9} f="#5d5951" /><E cx={382} cy={157} rx={48} ry={9} f="#827c70" />
        <path d="M160 127 Q180 118 222 128 L218 138 Q180 138 160 127Z M205 138 Q225 132 230 140 L210 143Z M124 142 L152 140 M230 123 L252 121" fill="#827c70" />
        <path d="M122 190 V242 M210 195 V272 M285 172 V232 M338 165 V245 M210 250 Q250 252 292 240 M328 222 Q390 228 440 208 M182 250 L210 252" fill="none" />

        <path d="M762 55 L735 78 L665 185 C630 250 618 330 625 388 L670 408 L707 210 L760 135 L830 95Z" fill="#5b5851" />
        <path d="M762 55 L735 78 L665 183 L707 210 L755 135 L780 105 L830 90Z" fill="#8b867b" />
        <path d="M707 210 L755 140 L830 110 L860 172 L790 305 L740 330 L670 385 C672 310 685 260 707 210Z" fill="#5e5a52" />
        <path d="M850 35 Q812 45 803 78 L850 115 L925 85 L915 72Z" fill="url(#hSide)" />
        <path d="M835 125 L850 95 Q870 65 890 66 L915 75 L870 170 L840 155Z" fill="#77736a" />
        <E cx={888} cy={120} rx={30} ry={53} r={25} f="#6b675f" /><E cx={889} cy={120} rx={23} ry={42} r={25} f="url(#hBore)" />
        <path d="M735 78 L775 105" /><path d="M752 130 L775 105 Q790 80 810 84 L832 98 L780 188 L752 175Z" fill="#77736a" />
        <E cx={800} cy={142} rx={32} ry={50} r={28} f="#6b675f" /><E cx={801} cy={143} rx={25} ry={41} r={28} f="url(#hBore)" />
        <path d="M625 388 L670 408 L715 450 L735 458 L700 445 L630 398Z" fill="#6b675f" />
        <path d="M755 290 Q695 315 670 385 V408 L720 450 L808 318Z" fill="url(#gHub2)" />
        <E cx={765} cy={388} rx={44} ry={75} r={25} f="#5e5a52" /><E cx={765} cy={385} rx={17} ry={30} r={25} f="url(#hBore)" />
        {holes([[787, 336], [732, 392], [791, 382], [743, 432]], 8, 12, 25, "#4a4740")}
      </g>
    </>
  );
}

function Sheet() {
  const xs = [608.3, 729.4, 850.5, 971.6, 1092.7, 1213.8, 1335];
  const ys = [334.7, 450.5, 566.5, 682.4, 798.3];
  return (
    <svg className="block shrink-0" width="1020" height="722" viewBox="450 206 1020 722">
      <defs>
        {Object.entries(stops).map(([id, s]) => (
          <linearGradient key={id} id={id} x1="0" y1="0" x2="0" y2="1">{s.map(([o, c]) => <stop key={o} offset={o} stopColor={c} />)}</linearGradient>
        ))}
        {Object.entries(hstops).map(([id, s]) => (
          <linearGradient key={id} id={id} x1="0" y1="0" x2="1" y2="0">{s.map(([o, c]) => <stop key={o} offset={o} stopColor={c} />)}</linearGradient>
        ))}
        <linearGradient id="hBore" x1="0" y1="0" x2="1" y2="1">
          <stop offset="0" stopColor="#6d6961" /><stop offset=".45" stopColor="#8a857b" /><stop offset=".6" stopColor="#aaa59c" /><stop offset="1" stopColor="#77736a" />
        </linearGradient>
        <linearGradient id="hBore2" x1="0" y1="0" x2="1" y2=".3">
          <stop offset="0" stopColor="#8d887d" /><stop offset=".35" stopColor="#4f4c46" /><stop offset=".6" stopColor="#7b776f" /><stop offset="1" stopColor="#55524b" />
        </linearGradient>
      </defs>
      <rect x="451" y="207" width="1017.500" height="719.500" fill="#fff" />
      <g stroke="#111" strokeWidth="1.200" fill="none">
        <path d="M487 206.600H450.600V243M1432 206.600H1468.500V243M487 926H450.600V890M1432 926H1468.500V890" />
        {xs.map((x, i) => <path key={x} d={i === 3 ? `M${x} 219V243M${x} 890V914` : `M${x} 219V231M${x} 902V914`} />)}
        {ys.map((y, i) => <path key={y} d={i === 2 ? `M487 ${y}H512M1432 ${y}H1456` : `M487 ${y}H499.500M1444 ${y}H1456`} />)}
        <path d="M499.500 231H1444V902H499.500z" stroke="#3c3c3c" strokeWidth="1.300" />
      </g>
      <g fontFamily="Liberation Sans" fontSize="10" textAnchor="middle" fill="#111">
        {[547, 668, 790, 911, 1032, 1153, 1274, 1395].map((x, i) => (
          <React.Fragment key={x}><text x={x} y="228">{i + 1}</text><text x={x} y="911">{i + 1}</text></React.Fragment>
        ))}
        {["A", "B", "C", "D", "E", "F"].map((l, i) => (
          <React.Fragment key={l}><text x="492.500" y={280 + i * 115.8}>{l}</text><text x="1449.500" y={280 + i * 115.8}>{l}</text></React.Fragment>
        ))}
      </g>
      <Parts />
      <g stroke="#222" strokeWidth="1.200" fill="none">
        <path d="M1008 902V788H1444M1008 812.300H1444M1148.500 836.300H1444M1296.500 877.600H1444M1066.600 788V812.300M1148.500 788V902M1296.500 788V902M1320.600 877.600V902M1407.600 877.600V902" />
      </g>
      <path d="M1010 788h15v7h-15zM1069 788h53v7h-53zM1151 788h30v7h-30zM1299 788h34v7h-34zM1151 813h41v6h-41zM1299 813h45v6h-45zM1151 837h11v7h-11zM1299 837h26v7h-26zM1299 878h12v7h-12zM1323 878h35v7h-35zM1410 878h16v7h-16z" fill="#000" />
      <g fontFamily="Liberation Sans" fill="#111">
        <text x="1151.500" y="809.500" fontSize="11.500" fontWeight="700" stroke="#000" strokeWidth=".8" textLength="78" lengthAdjust="spacingAndGlyphs">Devanshi Ingole</text>
        <text x="1233" y="809" fontSize="12.400" textLength="60.500" lengthAdjust="spacingAndGlyphs">12-04-2024</text>
        <text x="1150.500" y="862" fontSize="16.600" textLength="123">assignment1fig5</text>
        <text x="1418.500" y="899" fontSize="12.600" textLength="14.500" lengthAdjust="spacingAndGlyphs">1/1</text>
      </g>
    </svg>
  );
}

function NavBar() {
  return (
    <div className="absolute top-[748px] left-[911px] flex h-[30px] w-[98px] items-center bg-[#f1f1f1] pl-[5px]">
      <svg width="20" height="20" viewBox="0 0 20 20" fill="#fff" stroke="#333" strokeWidth="1.100">
        <path d="M6 18L1.500 12q-1-2 1-1.800L5 12 3 5q0-1.700 1.800-1L6.500 9 6.800 2.500Q8 .8 9 2.500V9l1.500-6q1.500-1 2 .5L12 9.500 14.500 5q1.500-.5 1.700 1L14.500 13 13 18z" />
      </svg>
      {[0, 1].map((i) => (
        <svg key={i} className="ml-[11px]" width="21" height="20" viewBox="0 0 21 20" fill="none">
          <path d="M12 12l7 6.500" stroke="#444" strokeWidth="3" />
          <circle cx="8" cy="7.500" r="6.500" fill="#dfeaf0" stroke="#8a9aa5" strokeWidth="1.300" />
          {i === 1 ? <path d="M4.500 4.500h7v6.500h-7z" fill="#c9d3da" stroke="#76828a" /> : <path d="M1 1h13v15H1z" stroke="#999" strokeWidth=".7" strokeDasharray="2 1.500" />}
        </svg>
      ))}
    </div>
  );
}

/* ---------- sheet strip ---------- */

function SheetStrip() {
  return (
    <div className="flex h-[63px] items-center border-t border-[#d8d8d8] bg-[#efefef] pt-[9px] pb-[2px] pl-[14px]">
      <svg width="55" height="42" viewBox="0 0 55 42">
        <path d="M0 0H55V42H0z" fill="#0c96da" />
        <path d="M4 4.500H51V38H4z" fill="#fff" />
        <path d="M47 5h4v31H5v-1h42z" fill="#999" />
        <path d="M5 5.500H46.500V34.500H5.500V5.500M28 34V30H46M34 30v5M40 30v5" fill="none" stroke="#000" strokeWidth="1.200" />
        <path d="M6 7h6l-1 3-2 3-3-2zM17 6h2v10l-1 1-1-3zM24 7l4 1 1 4-1 3-3-2zM33 7l4 1 2 5-1 4-3-1-1-5zM6 18h6v2H6zM16 16l3-1v4l-1 5-2-2zM24 17l4 1-1 5-2 1-2-3zM35 17l2-1v6l-2 2zM41 17l2 2 1 5-2-1zM8 22l4 2-1 4-3 3-1-4zM17 24l4 2-2 5-3-2zM25 24l4 1-1 2-4-1zM35 23l3 0-2 6-3 2-1-3z" />
      </svg>
      <div className="ml-[4px] flex h-[42px] w-[56px] items-center justify-center bg-[#f1f1f1]">
        <svg width="27" height="28" stroke="#505050" strokeWidth="4.800"><path d="M13.500 0v28M0 14.500h27" /></svg>
      </div>
    </div>
  );
}

/* ---------- taskbar ---------- */

type TaskProps = { cx: number; children: React.ReactNode; bg?: string; dot?: string; badge?: React.ReactNode; badgeBg?: string };
function Task({ cx, children, bg = "", dot = "", badge, badgeBg }: TaskProps) {
  return (
    <div className="flex w-[55px] shrink-0 items-center justify-center">
      <div className={`relative h-[50px] w-[49px] rounded-[4px] ${bg}`}>
        <Art x={cx - 60} y={45} w={120} h={150}>{children}</Art>
        {badgeBg && <div className={`absolute top-[4px] left-[26px] flex h-[20px] w-[20px] items-center justify-center rounded-full text-[13px] text-[#222] ${badgeBg}`}>{badge}</div>}
        {dot && <div className={`absolute bottom-[1px] left-1/2 h-[4px] -translate-x-1/2 rounded-full ${dot}`} />}
      </div>
    </div>
  );
}

function Taskbar() {
  return (
    <div className={`flex h-[60px] border-t border-[#55525a] bg-[linear-gradient(90deg,#241f31_0%,#241e33_20%,#2b1b3b_25%,#301f3a_31%,#2a262b_36%,#282828_45%,#292929_80%,#2c2322_90%,#3a1b1c_97%,#331a1c_100%)] ${UI}`}>
      <svg className="mt-[15px] ml-[28px] shrink-0" width="25" height="26">
        <defs><linearGradient id="sun" x1="0" y1="0" x2="1" y2="1"><stop offset="0" stopColor="#f0b52a" /><stop offset="1" stopColor="#f26a12" /></linearGradient></defs>
        <circle cx="12" cy="13" r="12.200" fill="url(#sun)" />
      </svg>
      <div className="ml-[11px] flex w-[259px] flex-col pt-[8.500px] text-[14.400px] leading-[20px] tracking-[-0.2px]">
        <span className="text-white">26°C</span>
        <span className="text-[#c5c2c9]">Sunny</span>
      </div>
      <svg className="mt-[15px] shrink-0" width="29" height="29">
        <defs><linearGradient id="win" x1="0" y1="0" x2="1" y2="1"><stop offset="0" stopColor="#86f0fe" /><stop offset="1" stopColor="#0b95f5" /></linearGradient></defs>
        <path d="M1 0h13v14H0V1zM15 0h13l1 1v13H15zM0 15h14v14H1l-1-1zM15 15h14v13l-1 1H15z" fill="url(#win)" />
      </svg>
      <div className="mt-[9px] ml-[17px] flex h-[40px] w-[274px] shrink-0 items-center overflow-hidden rounded-full border border-[#5b5163] bg-[linear-gradient(90deg,#3f394c,#4a3b54)] pl-[14px]">
        <svg width="19" height="19" fill="none" stroke="#e2e0e6" strokeWidth="1.900"><circle cx="8" cy="8" r="6.800" /><path d="M13 13l5 5" /></svg>
        <span className="mt-[1px] ml-[12px] text-[16px] tracking-[0.05px] text-[#d6d3da]">Search</span>
        <svg className="ml-auto" width="62" height="34" viewBox="0 0 62 34">
          <defs>
            <radialGradient id="night"><stop offset="0" stopColor="#10215f" /><stop offset=".7" stopColor="#15265e" /><stop offset="1" stopColor="#3a3450" stopOpacity="0" /></radialGradient>
            <linearGradient id="planet" x1="0" y1="0" x2="0" y2="1"><stop offset="0" stopColor="#f2705f" /><stop offset="1" stopColor="#c51e83" /></linearGradient>
          </defs>
          <ellipse cx="30" cy="21" rx="32" ry="20" fill="url(#night)" />
          <path d="M21 0H60Q60 18 46 23 36 25 28 16 21 9 21 0z" fill="#e65b93" />
          <path d="M23 0H58Q57 17 45 21 36 22 30 15 24 9 23 0z" fill="url(#planet)" />
          <path d="M32 0h20q-2 10-10 10T32 0z" fill="#ef5a5c" opacity=".6" />
          <path d="M1 4l9 4 14 15 2 6-6-3L4 11z" fill="#cfc9d6" />
          <path d="M9 16l-1 7 6-3zM17 8l4 7 1-6z" fill="#8e879c" />
          <circle cx="4" cy="26" r="4" fill="#4f92b0" />
          <path d="M12 24h1M20 28h1M34 27h1M42 26h1M48 27h1M15 3h1" stroke="#fff" />
        </svg>
      </div>
      <div className="ml-[3.500px] flex shrink-0">
        <Task cx={83}>
          <rect x="65" y="79" width="55" height="60" rx="3" fill="#ededed" />
          <path d="M47 104 Q47 101 50 101 H103 V158 Q103 161 100 161 H50 Q47 161 47 158Z" fill="#666" />
          <rect x="65" y="101" width="38" height="38" fill="#a6a6a6" />
        </Task>
        <Task cx={217} badge="1" badgeBg="bg-[#d9a0e4]">
          <path d="M181 161 Q188 150 184 140 Q176 105 196 88 Q220 70 242 90 Q258 115 247 140 Q230 165 206 159 Q195 163 181 161Z" fill="#6668c4" />
          <rect x="196" y="102" width="28" height="35" rx="5" fill="#fff" /><path d="M227 113 L238 105 V135 L227 127Z" fill="#fff" />
        </Task>
        <Task cx={352} bg="bg-[#373737]" dot="w-[8px] bg-[#a5a5a5]">
          <defs>
            <linearGradient id="edgeA" x1="0" y1="0" x2="1" y2=".4"><stop offset="0" stopColor="#259ae0" /><stop offset=".6" stopColor="#33c4c9" /><stop offset="1" stopColor="#74e45c" /></linearGradient>
          </defs>
          <ellipse cx="353" cy="120" rx="37" ry="45" fill="#1470cc" />
          <path d="M358 134 L391 118 L392 140 L372 147Z" fill="#373737" />
          <path d="M317 112 Q322 77 354 75 Q386 78 390 112 Q389 132 368 134 Q356 133 360 124 Q365 112 354 105 Q334 97 317 112Z" fill="url(#edgeA)" />
          <path d="M342 112 Q330 150 362 160 Q378 156 386 142 Q372 149 358 142 Q346 132 350 112Z" fill="#114b92" />
        </Task>
        <Task cx={487}>
          <path d="M451 86 Q451 82 455 82 H475 L482 91 V110 H451Z" fill="#d89a13" />
          <path d="M451 96 H482 L488 92 H521 Q524 92 524 96 V156 Q524 160 520 160 H455 Q451 160 451 156Z" fill="#ffce46" />
          <path d="M463 160 V144 Q463 138 469 138 H506 Q512 138 512 144 V160Z" fill="#1273c9" /><path d="M473 150 H501" stroke="#0b4f93" strokeWidth="1.800" />
        </Task>
        <Task cx={622}>
          <path d="M604 94 V80 H638 V94" stroke="#2aaee0" strokeWidth="2" />
          <path d="M586 91 H657 V152 Q657 165 647 165 H596 Q586 165 586 152Z" fill="#f2f2f2" />
          <path d="M608 111h12v15h-12z" fill="#f25022" /><path d="M623 111h12v15h-12z" fill="#7fba00" /><path d="M608 129h12v15h-12z" fill="#00a4ef" /><path d="M623 129h12v15h-12z" fill="#ffb900" />
        </Task>
        <Task cx={757} dot="w-[8px] bg-[#a5a5a5]" badge="5" badgeBg="bg-[#d9a0e4]">
          <path d="M722 163 L727 142 Q717 115 732 93 Q750 70 777 83 Q797 98 791 130 Q782 155 757 158 Q747 158 740 155Z" fill="#232d27" stroke="#25d366" strokeWidth="2.400" />
          <path d="M743 98 Q736 105 741 116 Q750 136 766 140 Q776 138 776 129 L766 122 L760 129 Q750 123 747 113 L752 107 L748 98Z" fill="#25d366" />
        </Task>
        <Task cx={892}>
          <rect x="855" y="75" width="74" height="90" rx="3" fill="#0a94d4" />
          <text x="861" y="131" fontSize="34" fill="#fff" fontFamily="Liberation Sans" fontStyle="italic" fontWeight="700" textLength="61" lengthAdjust="spacingAndGlyphs">myhp</text>
        </Task>
        <Task cx={1027}>
          <ellipse cx="1026" cy="120" rx="37" ry="45" fill="#fcc934" />
          <path d="M1026 120 L994 97 Q1005 76 1026 75 Q1050 76 1059 97Z" fill="#ea4335" />
          <path d="M1026 120 L994 97 Q981 125 998 151 Q1008 165 1022 165 L1042 132Z" fill="#2da94f" />
          <path d="M1026 97 H1059 Q1050 75 1026 75" fill="#ea4335" />
          <ellipse cx="1026" cy="119" rx="18.500" ry="23" fill="#fff" /><ellipse cx="1026" cy="119" rx="14.500" ry="18" fill="#3c7ded" />
        </Task>
        <Task cx={1161} badgeBg="bg-[#ffbf0e]">
          <ellipse cx="1161" cy="120" rx="35" ry="43" fill="#0a94d4" stroke="#fff" strokeWidth="1.800" />
          <path d="M1148 108 Q1150 91 1163 91 Q1177 93 1175 107 Q1173 116 1160 124 V134 M1158 141 L1157 151" stroke="#fff" strokeWidth="3.600" />
        </Task>
        <Task cx={1296}>
          <defs><linearGradient id="fox" x1="0" y1="1" x2="1" y2="0"><stop offset="0" stopColor="#f9246d" /><stop offset=".5" stopColor="#ff7a22" /><stop offset="1" stopColor="#ffe63d" /></linearGradient></defs>
          <path d="M1264 105 L1268 86 L1278 98 Q1285 92 1292 93 Q1290 82 1305 75 Q1310 88 1320 90 Q1333 110 1328 130 Q1318 160 1294 160 Q1262 155 1262 120Z" fill="url(#fox)" />
          <path d="M1283 106 Q1293 96 1305 102 Q1315 120 1303 133 Q1288 138 1281 125 Q1292 122 1283 106Z" fill="#7a3be0" />
        </Task>
        <Task cx={1431}>
          <rect x="1394" y="75" width="74" height="90" rx="4" fill="#4a4a4a" />
          <path d="M1411 103 L1449 90 V103 L1425 112 L1449 119 V137 L1411 151 V137 L1435 128 L1411 120Z" fill="#ff9800" />
        </Task>
        <Task cx={1565} bg="bg-[#3a3a3a] shadow-[5px_0_0_-1px_#343434]" dot="w-[20px] bg-[#e2a0e8]">
          <path d="M1532 82 L1543 75 H1595 Q1599 75 1599 80 V138 H1532Z" fill="#ff6b00" />
          <path d="M1532 82 L1543 75 V138 H1532Z" fill="#ff9a50" />
          <path d="M1532 138 H1599 V160 Q1599 165 1595 165 H1545 L1532 158Z" fill="#8b3a00" />
          <path d="M1561 130 V92 H1582 M1561 110 H1579" stroke="#fff" strokeWidth="2.600" />
          <text x="1552" y="158" fontSize="17" fontWeight="700" fill="#fff" fontFamily="Liberation Sans" textLength="32" lengthAdjust="spacingAndGlyphs">FUS</text>
        </Task>
        <Task cx={133} dot="w-[8px] bg-[#a5a5a5]">
          <path d="M97 101 L104 94 L150 139 V165Z" fill="#0a6fb8" />
          <path d="M97 138 L104 146 L150 101 V75Z" fill="#0f84d0" />
          <path d="M150 75 L169 84 V155 L150 165 L144 160 L150 139 V101 L144 80Z" fill="#29a7f2" />
        </Task>
        <Task cx={267} bg="bg-[#482829]" dot="w-[8px] bg-[#ff9ba1]">
          <rect x="230" y="75" width="55" height="66" rx="6" fill="#f4f4f4" />
          <path d="M241 123 V89 H270" stroke="#e0400f" strokeWidth="2.600" strokeDasharray="3.500 1.500" />
          <path d="M273 94 V141 M246 130 H289" stroke="#a9a9ab" strokeWidth="3" />
          <ellipse cx="296" cy="122" rx="7" ry="8.500" stroke="#2298e0" strokeWidth="2" /><ellipse cx="269" cy="155" rx="7" ry="8.500" stroke="#2298e0" strokeWidth="2" />
          <path d="M273 130 L290 126 M270 146 L275 130" stroke="#2298e0" strokeWidth="2.400" />
        </Task>
        <Task cx={402} dot="w-[8px] bg-[#a5a5a5]">
          <defs><linearGradient id="pho" x1="0" y1="0" x2="1" y2="0"><stop offset="0" stopColor="#0f6cc9" /><stop offset="1" stopColor="#6a4fae" /></linearGradient></defs>
          <rect x="370" y="81" width="64" height="79" rx="5" fill="url(#pho)" />
          <path d="M370 146 L396 111 Q401 105 407 111 L434 146 V154 Q434 160 428 160 H376 Q370 160 370 154Z" fill="#5fd8f5" />
          <path d="M376 160 L402 130 L430 160Z" fill="#1385e0" />
          <ellipse cx="418" cy="95" rx="6.500" ry="8" fill="#eef4fb" />
        </Task>
      </div>
      <Art x={650} y={33} w={180} h={177} className="ml-[73.500px]">
        <path d="M677 130 L693 112 L710 130" stroke="#fff" strokeWidth="1.900" />
        <path d="M767 126 Q766 114 778 112 Q784 98 796 99 Q806 103 806 115 V136 H775 Q768 134 767 126Z" fill="#c9c9c9" />
        <path d="M780 110 Q786 98 796 99 Q806 103 806 115 L795 118Z" fill="#8f8f8f" />
        <ellipse cx="802" cy="134" rx="14.500" ry="17" fill="#fff" />
        <path d="M793 131 Q797 120 808 126 M811 121 V130 H803 M811 137 Q806 148 796 142 M793 147 V138 H801" stroke="#1769c4" strokeWidth="1.500" />
      </Art>
      <div className="ml-[1px] flex w-[63px] shrink-0 flex-col items-center pt-[8.500px] text-[14.500px] leading-[20px] tracking-[-0.2px] text-white">
        <span>ENG</span><span>IN</span>
      </div>
      <Art x={985} y={33} w={220} h={177}>
        <path d="M1001 113 Q1024 83 1048 113 M1007 121 Q1024 98 1042 121 M1013 129 Q1024 114 1036 129" stroke="#fff" strokeWidth="1.700" />
        <ellipse cx="1024.500" cy="134" rx="4.500" ry="5.500" fill="#fff" />
        <path d="M1074 112 H1081 L1092 101 V138 L1081 128 H1074Z" stroke="#fff" strokeWidth="1.300" />
        <path d="M1098 111 Q1102 120 1098 129 M1104 105 Q1111 120 1104 135" stroke="#ddd" strokeWidth="1.300" /><path d="M1110 98 Q1121 120 1110 142" stroke="#777" strokeWidth="1.300" />
        <path d="M1160 105 H1183 Q1188 105 1188 110 V130 Q1188 135 1183 135 H1155 Q1150 135 1150 130 V121" stroke="#fff" strokeWidth="1.500" />
        <path d="M1163 110 H1184 V131 H1155 V122Z M1191 114 H1196 V127 H1191Z" fill="#fff" />
        <path d="M1154 90 L1146 110 H1151 L1149 124 L1160 104 H1154Z" fill="#fff" />
      </Art>
      <div className="flex w-[92.500px] shrink-0 flex-col items-end pt-[7.500px] text-[14.800px] leading-[20px] tracking-[-0.05px] text-white">
        <span>09:30</span><span>14-04-2024</span>
      </div>
      <Art x={1461} y={33} w={42} h={177} className="ml-[11px]">
        <path d="M1463 138 L1467 128 V113 Q1468 94 1482 93 Q1497 94 1498 113 V128 L1502 138Z M1475 143 H1490 Q1487 151 1482 151 Q1477 151 1475 143Z" fill="#eeb9f2" />
      </Art>
    </div>
  );
}

export default function App() {
  return (
    <div className="flex h-[1080px] w-[1920px] flex-col overflow-hidden bg-[#a5a5a5]">
      <TitleBar />
      <TabBar />
      <Ribbon />
      <main className="relative flex h-[782px] shrink-0">
        <div className="flex w-[450px] shrink-0 flex-col justify-between pt-[5.500px] pb-[5px] pl-[5px]">
          <Browser />
          <div className={`flex h-[31px] w-[375px] items-center border-r border-b-2 border-[#cfcfcf] bg-[#f2f2f2] pt-[2px] pl-[31px] ${SANS}`}>
            <span className="text-[13.700px] text-[#5d5d5d]">COMMENTS</span>
            <svg className="mr-[13.500px] ml-auto" width="12" height="12"><circle cx="6" cy="6" r="5.800" fill="#333" /><path d="M3 6h6M6 3v6" stroke="#eee" strokeWidth="1.500" /></svg>
          </div>
        </div>
        <div className="pt-[31px]"><Sheet /></div>
        <NavBar />
      </main>
      <SheetStrip />
      <Taskbar />
    </div>
  );
}
